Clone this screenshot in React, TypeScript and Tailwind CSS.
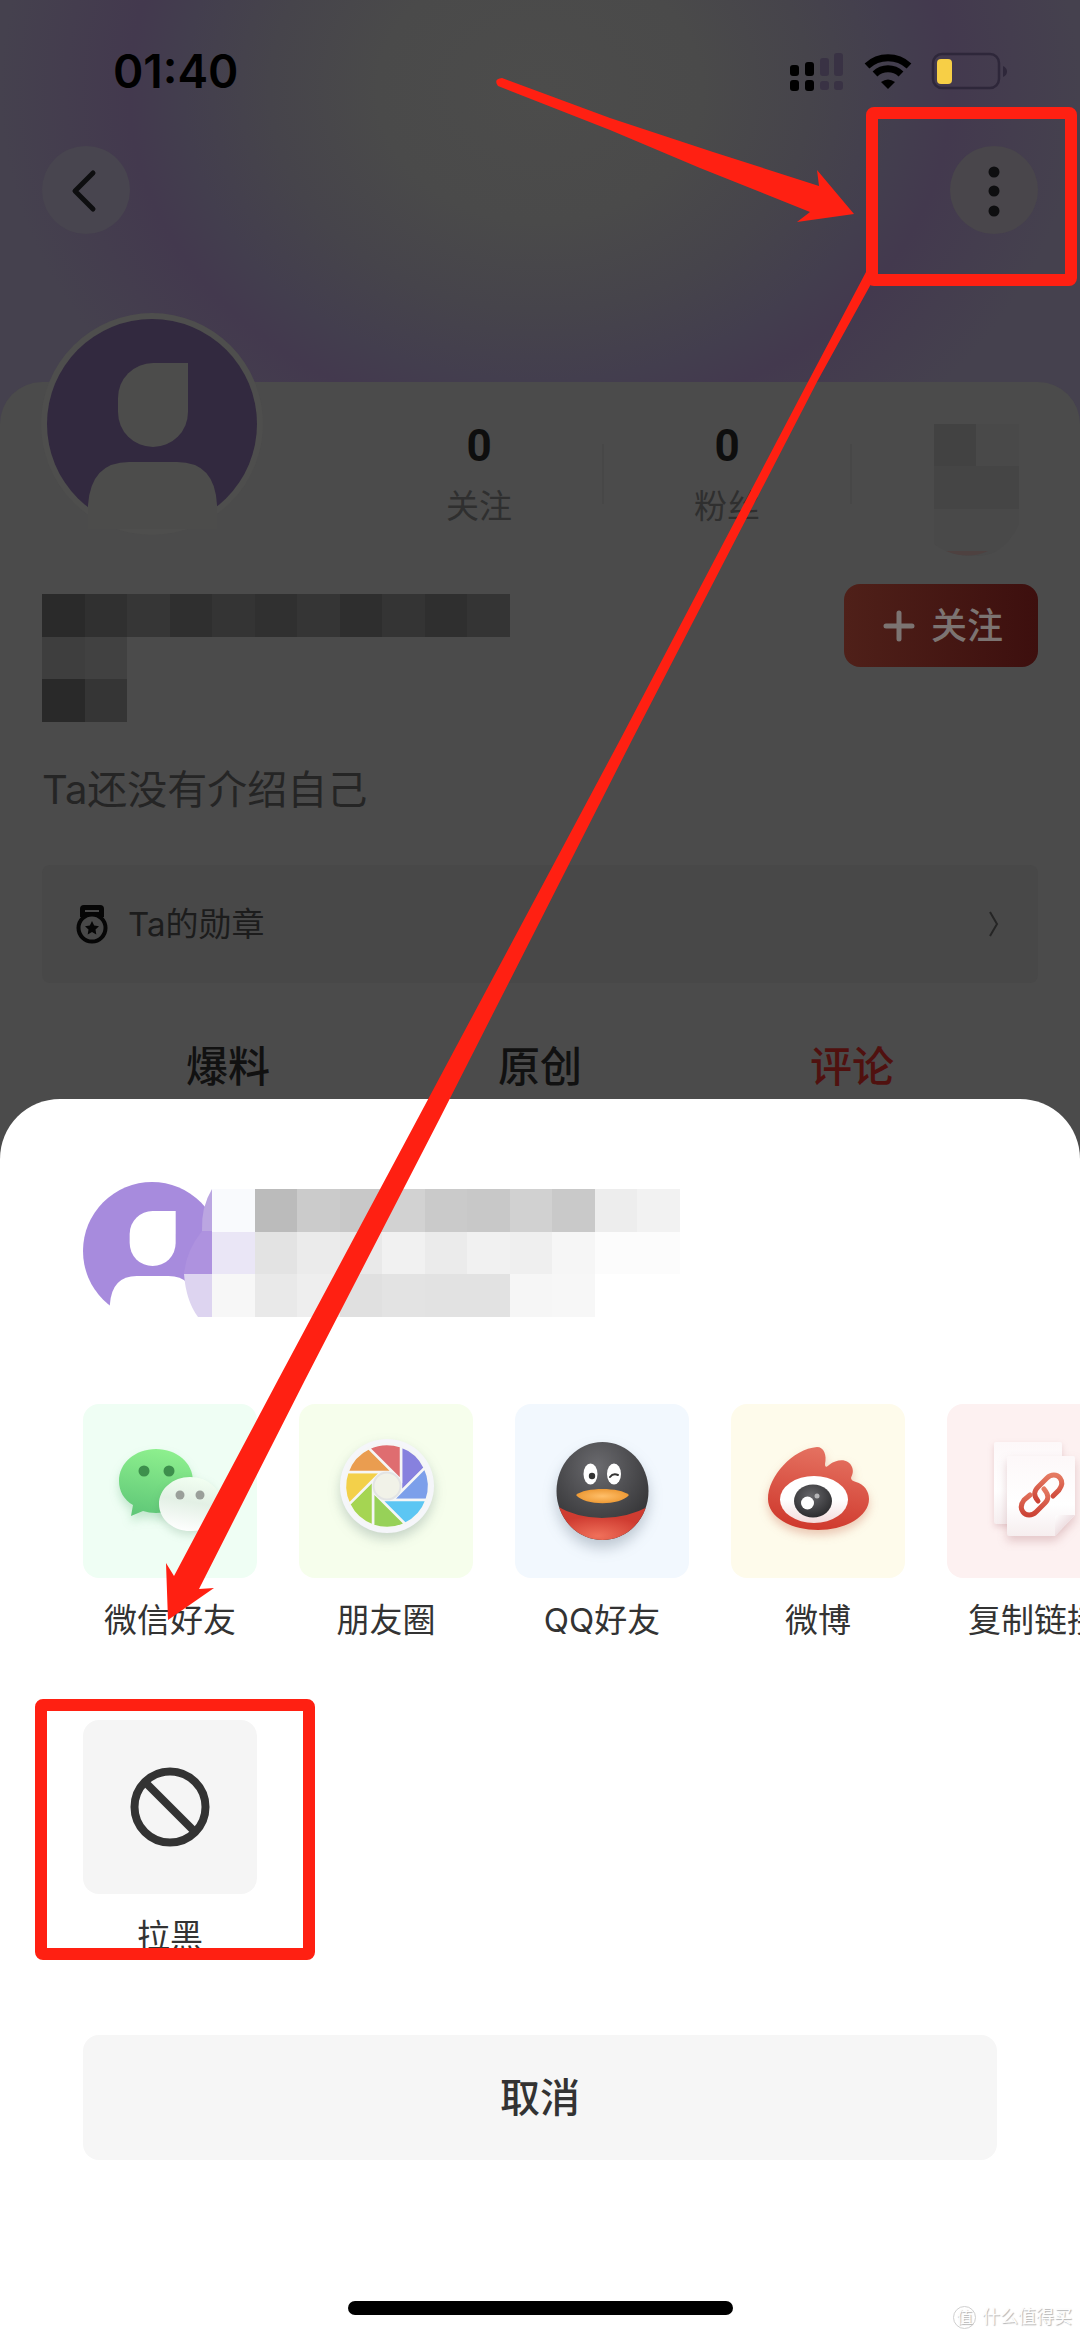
import type { ReactNode } from 'react';

const nameCells = [
  ['#2a2a2a', '#303030', '#363636', '#2f2f2f', '#343434', '#303030', '#353535', '#2e2e2e', '#343434', '#2f2f2f', '#343434'],
  ['#3e3e3e', '#414141'],
  ['#292929', '#353535'],
];

const sheetCells = [
  ['#f9fafd', '#bbbbbb', '#cbcbcb', '#c8c8c8', '#d2d2d2', '#cacaca', '#c8c8c8', '#d1d1d1', '#c9c9c9', '#ededed', '#f2f2f2'],
  ['#eae6f6', '#e3e3e3', '#ebebeb', '#e9e9e9', '#f1f1f1', '#ebebeb', '#f1f1f1', '#efefef', '#f6f6f6', '#fcfcfc', '#fcfcfc'],
  ['#f7f7f7', '#e9e9e9', '#eeeeee', '#e0e0e0', '#e3e3e3', '#e2e2e2', '#e2e2e2', '#f6f6f6', '#f7f7f7'],
];

function Mosaic({ rows, x = 0 }: { rows: string[][]; x?: number }) {
  return (
    <g shapeRendering="crispEdges">
      {rows.map((row, r) =>
        row.map((fill, c) => (
          <rect key={`${r}-${c}`} x={x + c * 42.5} y={r * 42.5} width="42.5" height="42.5" fill={fill} />
        ))
      )}
    </g>
  );
}

function Avatar({ className, bg, fg }: { className: string; bg: string; fg: string }) {
  return (
    <svg viewBox="0 0 210 210" className={className} aria-hidden="true">
      <circle cx="105" cy="105" r="105" fill={bg} />
      <path d="M106 44H141V93A35 35 0 0 1 71 93V79A35 35 0 0 1 106 44Z" fill={fg} />
      <path d="M41 212V186Q44 143 82 143H130Q168 143 170 186V212Z" fill={fg} />
    </svg>
  );
}

function StatusIcons() {
  return (
    <svg viewBox="0 0 217 40" className="h-[40px] w-[217px]" aria-hidden="true">
      {/* dual sim signal */}
      <g fill="#000">
        <rect x="0" y="14" width="9" height="11" rx="3" />
        <rect x="15" y="11" width="9" height="14" rx="3" />
        <rect x="0" y="29" width="9" height="11" rx="3" />
        <rect x="15" y="29" width="9" height="11" rx="3" />
      </g>
      <g fill="#393244">
        <rect x="30" y="7" width="9" height="18" rx="3" />
        <rect x="44" y="2" width="9" height="23" rx="3" />
        <rect x="30" y="30" width="9" height="9" rx="3" />
        <rect x="44" y="30" width="9" height="9" rx="3" />
      </g>
      {/* wifi */}
      <g fill="none" stroke="#000" strokeWidth="7">
        <path d="M77 15A31 31 0 0 1 119 15" />
        <path d="M85 23A19 19 0 0 1 111 23" />
      </g>
      <path d="M98 38L91 31Q98 26 105 31Z" fill="#000" />
      {/* battery */}
      <rect x="143" y="3" width="66" height="34" rx="9" fill="none" stroke="#2e273a" strokeWidth="2.5" />
      <rect x="147" y="8" width="15" height="25" rx="4" fill="#f7cf46" />
      <path d="M213 15Q217 17 217 20.500Q217 24 213 26Z" fill="#2e273a" />
    </svg>
  );
}

function WechatIcon() {
  return (
    <svg viewBox="0 0 174 174" aria-hidden="true">
      <defs>
        <linearGradient id="wxGreen" x1="0.600" y1="0" x2="0.400" y2="1">
          <stop offset="0" stopColor="#8ef08e" />
          <stop offset="1" stopColor="#60c878" />
        </linearGradient>
        <linearGradient id="wxWhite" x1="0.600" y1="0" x2="0.400" y2="1">
          <stop offset="0" stopColor="#f2fff2" />
          <stop offset="0.450" stopColor="#e3f0e5" />
          <stop offset="1" stopColor="#ffffff" />
        </linearGradient>
      </defs>
      <g className="drop-shadow-[0_6px_5px_rgba(60,160,90,0.250)]">
        <path d="M73 45C94 45 110 59 110 77C110 95 94 109 73 109C68 109 64 108 60 107L48 112L50 101C41 96 36 87 36 77C36 59 52 45 73 45Z" fill="url(#wxGreen)" />
      </g>
      <circle cx="61" cy="67" r="5.500" fill="#3d8f4c" />
      <circle cx="86" cy="67" r="5.500" fill="#3d8f4c" />
      <g className="drop-shadow-[0_4px_4px_rgba(60,120,80,0.200)]">
        <path d="M107 73C125 73 138 85 138 100C138 108 134 115 128 120L129 128L119 125C115 127 111 127 107 127C90 127 76 115 76 100C76 85 90 73 107 73Z" fill="url(#wxWhite)" />
      </g>
      <circle cx="97" cy="91" r="4.500" fill="#9a9f9a" />
      <circle cx="117" cy="91" r="4.500" fill="#9a9f9a" />
    </svg>
  );
}

const bladeColors = ['#8781de', '#7c9fea', '#5cc6f3', '#97d158', '#a5d552', '#f3d04a', '#ea9d50', '#df6d70'];

// one blade of the shutter: two tangents of the inner circle and the rim between them
function bladePath(index: number) {
  const inner = 14;
  const outer = 42;
  const t = (index * Math.PI) / 4;
  const n = t + Math.PI / 4;
  const d = Math.sqrt(outer * outer - inner * inner);
  const corner = inner / Math.cos(Math.PI / 8);
  const p = (x: number, y: number) => `${(88 + x).toFixed(1)} ${(82 + y).toFixed(1)}`;
  const v = p(corner * Math.cos(t + Math.PI / 8), corner * Math.sin(t + Math.PI / 8));
  const a = p(inner * Math.cos(t) + d * Math.sin(t), inner * Math.sin(t) - d * Math.cos(t));
  const b = p(inner * Math.cos(n) + d * Math.sin(n), inner * Math.sin(n) - d * Math.cos(n));
  return `M${v}L${a}A${outer} ${outer} 0 0 1 ${b}Z`;
}

function MomentsIcon() {
  return (
    <svg viewBox="0 0 174 174" aria-hidden="true">
      <g className="drop-shadow-[0_6px_6px_rgba(60,90,90,0.250)]">
        <circle cx="88" cy="82" r="47" fill="#f5f6fa" />
      </g>
      {bladeColors.map((color, i) => (
        <path key={color} d={bladePath(i)} fill={color} stroke="#f5f6f6" strokeWidth="2.500" />
      ))}
      <circle cx="88" cy="82" r="13.500" fill="#f1f2e8" stroke="#e3e4e4" strokeWidth="2" />
    </svg>
  );
}

function QQIcon() {
  return (
    <svg viewBox="0 0 174 174" aria-hidden="true">
      <defs>
        <radialGradient id="qqHead" cx="0.450" cy="0.250" r="0.700">
          <stop offset="0" stopColor="#6a6a6e" />
          <stop offset="1" stopColor="#343436" />
        </radialGradient>
        <radialGradient id="qqScarf" cx="0.450" cy="0.800" r="0.500">
          <stop offset="0" stopColor="#f0705a" />
          <stop offset="1" stopColor="#cf3c31" />
        </radialGradient>
        <radialGradient id="qqBeak">
          <stop offset="0" stopColor="#ffbf6a" />
          <stop offset="1" stopColor="#ee9a35" />
        </radialGradient>
        <clipPath id="qqClip">
          <ellipse cx="87.500" cy="87" rx="46" ry="49" />
        </clipPath>
      </defs>
      <g className="drop-shadow-[0_8px_7px_rgba(70,90,110,0.300)]">
        <ellipse cx="87.500" cy="87" rx="46" ry="49" fill="url(#qqHead)" />
      </g>
      <path d="M38 100Q60 114 87 114Q115 114 138 100V140H38Z" fill="url(#qqScarf)" clipPath="url(#qqClip)" />
      <ellipse cx="75.500" cy="70" rx="7" ry="10.500" fill="#fff" />
      <ellipse cx="99" cy="70" rx="7" ry="10.500" fill="#fff" />
      <circle cx="77" cy="72" r="3.200" fill="#333" />
      <path d="M95 73Q98 69 103 71" fill="none" stroke="#333" strokeWidth="2" strokeLinecap="round" />
      <path d="M61 91C70 83 105 83 114 91C105 102 70 102 61 91Z" fill="url(#qqBeak)" />
    </svg>
  );
}

function WeiboIcon() {
  return (
    <svg viewBox="0 0 174 174" aria-hidden="true">
      <defs>
        <linearGradient id="wbBody" x1="0.600" y1="0" x2="0.400" y2="1">
          <stop offset="0" stopColor="#e57362" />
          <stop offset="1" stopColor="#cf382c" />
        </linearGradient>
        <linearGradient id="wbEye" x1="0" y1="0" x2="0" y2="1">
          <stop offset="0.500" stopColor="#ffffff" />
          <stop offset="1" stopColor="#f3dcdc" />
        </linearGradient>
        <radialGradient id="wbIris" cx="0.450" cy="0.350" r="0.700">
          <stop offset="0" stopColor="#66666a" />
          <stop offset="1" stopColor="#29292b" />
        </radialGradient>
      </defs>
      <g className="drop-shadow-[0_5px_5px_rgba(190,80,50,0.300)]">
        <path
          d="M86 43C93 43 96 51 94 60C94 63 95 64 98 61C107 54 118 55 121 63C123 68 121 71 120 74C120 76 122 77 125 78C133 80 138 87 138 95C138 112 115 126 87 126C60 126 37 113 37 95C37 72 62 45 86 43Z"
          fill="url(#wbBody)"
        />
      </g>
      <ellipse cx="83" cy="95.500" rx="34" ry="23.500" fill="url(#wbEye)" />
      <ellipse cx="82" cy="97" rx="19" ry="16.500" fill="url(#wbIris)" />
      <circle cx="76.500" cy="99" r="6.500" fill="#fff" />
      <circle cx="86" cy="92" r="2.500" fill="#b5b5b7" />
    </svg>
  );
}

function CopyLinkIcon() {
  return (
    <svg viewBox="0 0 174 174" aria-hidden="true">
      <defs>
        <linearGradient id="linkStroke" x1="0" y1="0" x2="0" y2="1">
          <stop offset="0" stopColor="#e57a62" />
          <stop offset="1" stopColor="#cc4336" />
        </linearGradient>
        <linearGradient id="linkPaper" x1="0" y1="0" x2="0" y2="1">
          <stop offset="0" stopColor="#fdf8f9" />
          <stop offset="0.600" stopColor="#ffffff" />
          <stop offset="1" stopColor="#f6eeef" />
        </linearGradient>
        <linearGradient id="linkFold" x1="0" y1="0" x2="1" y2="1">
          <stop offset="0" stopColor="#ffffff" />
          <stop offset="0.500" stopColor="#eedfe2" />
        </linearGradient>
      </defs>
      <g className="drop-shadow-[0_3px_3px_rgba(150,70,80,0.200)]">
        <rect x="47" y="38" width="68" height="82" rx="2" fill="url(#linkPaper)" />
      </g>
      <g className="drop-shadow-[0_5px_5px_rgba(150,70,80,0.250)]">
        <path d="M62 52H126Q128 52 128 54V111L108 132H62Q60 132 60 130V54Q60 52 62 52Z" fill="url(#linkPaper)" />
        <path d="M108 132V114Q108 111 111 111H128Z" fill="url(#linkFold)" />
      </g>
      <g fill="none" stroke="url(#linkStroke)" strokeWidth="5" strokeLinecap="round">
        <path d="M91 97C86 91 87 87 91 83L100 74C104 70 110 70 113 74C116 78 115 82 112 86L106 92" />
        <path d="M97 85C102 91 102 95 98 99L89 108C85 112 79 112 76 108C73 104 74 100 77 96L83 91" />
      </g>
    </svg>
  );
}

function BlockIcon() {
  return (
    <svg viewBox="0 0 174 174" fill="none" stroke="#333" strokeWidth="8" aria-hidden="true">
      <circle cx="87" cy="87" r="35.500" />
      <path d="M62 62L112 112" />
    </svg>
  );
}

const shareItems = [
  { label: '微信好友', tile: 'bg-[#effef4]', icon: <WechatIcon /> },
  { label: '朋友圈', tile: 'bg-[#f6feec]', icon: <MomentsIcon /> },
  { label: 'QQ好友', tile: 'bg-[#f2f8fe]', icon: <QQIcon /> },
  { label: '微博', tile: 'bg-[#fefbeb]', icon: <WeiboIcon /> },
  { label: '复制链接', tile: 'bg-[#fdf1f1]', icon: <CopyLinkIcon /> },
];

function ActionButton({ label, tile, icon }: { label: string; tile: string; icon: ReactNode }) {
  return (
    <button type="button" className="flex w-[174px] shrink-0 flex-col items-center gap-5">
      <span className={`block size-[174px] rounded-2xl ${tile}`}>{icon}</span>
      <span className="text-[33px] leading-[44px] whitespace-nowrap text-[#333]">{label}</span>
    </button>
  );
}

function Stat({ value, label }: { value: number; label: string }) {
  return (
    <div className="flex h-[100px] w-[248px] items-center">
      <div className="flex flex-1 flex-col items-center gap-5">
        <span className="font-['Roboto',sans-serif] text-[44px] leading-[44px] font-bold text-[#0e0e0e]">
          {value}
        </span>
        <span className="text-[33px] leading-[36px] text-[#2f2f2f]">{label}</span>
      </div>
      <div className="h-[60px] w-[2px] bg-[#474747]" />
    </div>
  );
}

export default function App() {
  return (
    <main className="relative flex min-h-screen flex-col overflow-hidden bg-[#4b4b4b] font-['Inter','Noto_Sans_CJK_SC',sans-serif]">
      {/* Profile page, dimmed */}
      <div className="bg-[radial-gradient(ellipse_540px_440px_at_50%_90px,#4c4c4b_0%,#4a4a4a_30%,#46444b_50%,#433e4e_66%,#43394e_76%,#45414e_100%)]">
        <div className="flex h-[142px] items-center justify-between pr-[73px] pl-[113px]">
          <time className="text-[46px] leading-[56px] font-semibold text-black">01:40</time>
          <StatusIcons />
        </div>

        <nav className="mt-1 flex justify-between px-[42px]">
          <button type="button" aria-label="返回" className="flex size-[88px] items-center justify-center rounded-full bg-[#48454f]">
            <svg viewBox="0 0 88 88" className="size-[88px]" fill="none" stroke="#0e0e10" strokeWidth="5" strokeLinecap="round" strokeLinejoin="round">
              <path d="M51 27L33 45L51 63" />
            </svg>
          </button>
          <button type="button" aria-label="更多" className="flex size-[88px] items-center justify-center rounded-full bg-[#49464b]">
            <svg viewBox="0 0 88 88" className="size-[88px]" fill="#0e0e10">
              <circle cx="44" cy="26" r="5.500" />
              <circle cx="44" cy="45" r="5.500" />
              <circle cx="44" cy="65" r="5.500" />
            </svg>
          </button>
        </nav>

        <section className="relative mt-[148px] rounded-t-[42px] bg-[#4b4b4b] pt-[42px]">
          <div className="absolute -top-[69px] left-[41px] size-[222px] rounded-full bg-[#4e4e4d] p-[6px]">
            <Avatar className="size-[210px]" bg="#32293f" fg="#4c4c4b" />
          </div>

          <div className="flex h-[100px] items-start pl-[356px]">
            <Stat value={0} label="关注" />
            <Stat value={0} label="粉丝" />
            <div className="pl-[82px]">
              <svg viewBox="0 0 85 132" className="h-[132px] w-[85px]" aria-hidden="true">
                <path d="M0 0H85V100Q70 132 43 132Q15 132 0 120Z" fill="#494949" />
                <rect width="42" height="42" fill="#424242" />
                <rect y="42" width="85" height="43" fill="#454545" />
                <path d="M12 127H54Q34 136 12 127Z" fill="#4e4140" />
              </svg>
            </div>
          </div>

          <div className="mt-[60px] flex justify-between px-[42px]">
            <svg viewBox="0 0 468 128" className="mt-[10px] h-[128px] w-[468px]" aria-hidden="true">
              <Mosaic rows={nameCells} />
            </svg>
            <button
              type="button"
              className="flex h-[83px] w-[194px] items-center justify-center gap-4 rounded-2xl bg-linear-to-r from-[#4f2019] to-[#3d0f0e] pl-1 text-[36px] leading-[44px] font-medium text-[#7c7472]"
            >
              <svg viewBox="0 0 32 32" className="size-[32px]" stroke="#7c7472" strokeWidth="5" strokeLinecap="round" aria-hidden="true">
                <path d="M16 3V29M3 16H29" />
              </svg>
              关注
            </button>
          </div>

          <p className="mt-[42px] px-[42px] text-[40px] leading-[52px] text-[#252525]">Ta还没有介绍自己</p>

          <a href="#medals" className="mx-[42px] mt-[49px] flex h-[118px] items-center rounded-lg bg-[#484848] pr-[38px] pl-[34px]">
            <svg viewBox="0 0 32 40" className="h-[40px] w-[32px]" aria-hidden="true">
              <path d="M8 1H24Q28 1 28 5V13H4V5Q4 1 8 1Z" fill="#060606" />
              <path d="M9 7H23" stroke="#484848" strokeWidth="2" />
              <circle cx="16" cy="24" r="13.500" fill="#484848" stroke="#060606" strokeWidth="4" />
              <path d="M16 17L18.200 21.500L23 22.200L19.500 25.600L20.300 30.400L16 28.100L11.700 30.400L12.500 25.600L9 22.200L13.800 21.500Z" fill="#060606" />
            </svg>
            <span className="flex-1 pl-5 text-[33px] leading-[44px] text-[#1c1c1c]">Ta的勋章</span>
            <svg viewBox="0 0 12 28" className="h-[28px] w-[12px]" fill="none" stroke="#252525" strokeWidth="2" aria-hidden="true">
              <path d="M2 2L9 14L2 26" />
            </svg>
          </a>

          <div className="mt-[52px] grid grid-cols-3 px-[72px] text-center text-[42px] leading-[64px] font-medium text-[#111]">
            <button type="button">爆料</button>
            <button type="button">原创</button>
            <button type="button" className="text-[#50110f]">评论</button>
          </div>
        </section>
      </div>

      {/* Share sheet */}
      <section className="flex-1 rounded-t-[60px] bg-white pt-[83px] pb-[22px]">
        <div className="relative ml-[83px] h-[138px]">
          <Avatar className="size-[138px]" bg="#a78bdd" fg="#ffffff" />
          <svg viewBox="0 0 496 128" className="absolute top-[7px] left-[101px] h-[128px] w-[496px]" aria-hidden="true">
            <path d="M28 0V42H18Q17 18 28 0Z" fill="#bba6e1" />
            <path d="M28 42V85H0Q2 62 18 42Z" fill="#ae92df" />
            <path d="M0 85H28V128H14Q2 112 0 85Z" fill="#ddd4f0" />
            <rect x="28" width="468" height="128" fill="#fff" />
            <Mosaic rows={sheetCells} x={28} />
          </svg>
        </div>

        <div className="mt-[84px] flex gap-[42px] overflow-x-auto pl-[83px] [scrollbar-width:none]">
          {shareItems.map((item) => (
            <ActionButton key={item.label} {...item} />
          ))}
        </div>

        <div className="mt-[78px] flex pl-[83px]">
          <ActionButton label="拉黑" tile="bg-[#f5f5f5]" icon={<BlockIcon />} />
        </div>

        <div className="mt-[77px] px-[83px]">
          <button type="button" className="h-[125px] w-full rounded-2xl bg-[#f6f6f6] text-[40px] leading-[52px] font-medium text-[#333]">
            取消
          </button>
        </div>

        <div className="mx-auto mt-[141px] h-[14px] w-[385px] rounded-full bg-black" />
      </section>

      {/* Watermark */}
      <div className="absolute right-2 bottom-2 flex items-center gap-[6px] text-[18px] leading-[24px] text-[#fdfdfd] [text-shadow:1px_1px_1px_#b4b4b4]">
        <span className="flex size-[23px] items-center justify-center rounded-full border border-[#cfcfcf] text-[16px]">值</span>
        <span>什么值得买</span>
      </div>

      {/* Red marks */}
      <svg viewBox="0 0 1080 2337" className="pointer-events-none absolute top-0 left-0 w-full" fill="#ff2012" aria-hidden="true">
        <g fill="none" stroke="#ff2012" strokeWidth="12" strokeLinejoin="round">
          <rect x="872" y="113" width="199" height="167" rx="2" />
          <rect x="41" y="1705" width="268" height="249" rx="2" />
        </g>
        <path d="M502 78L610 118L713 152L819 186L817 170L854 214L797 222L810 212L700 168L610 130L498 86Q493 79 502 78Z" />
        <path d="M866 272L809 380L620 740L417 1120L278 1380L174 1576L166 1563L168 1620L214 1588L199 1589L305 1380L439 1120L632 740L818 380L871 284Z" />
      </svg>
    </main>
  );
}
